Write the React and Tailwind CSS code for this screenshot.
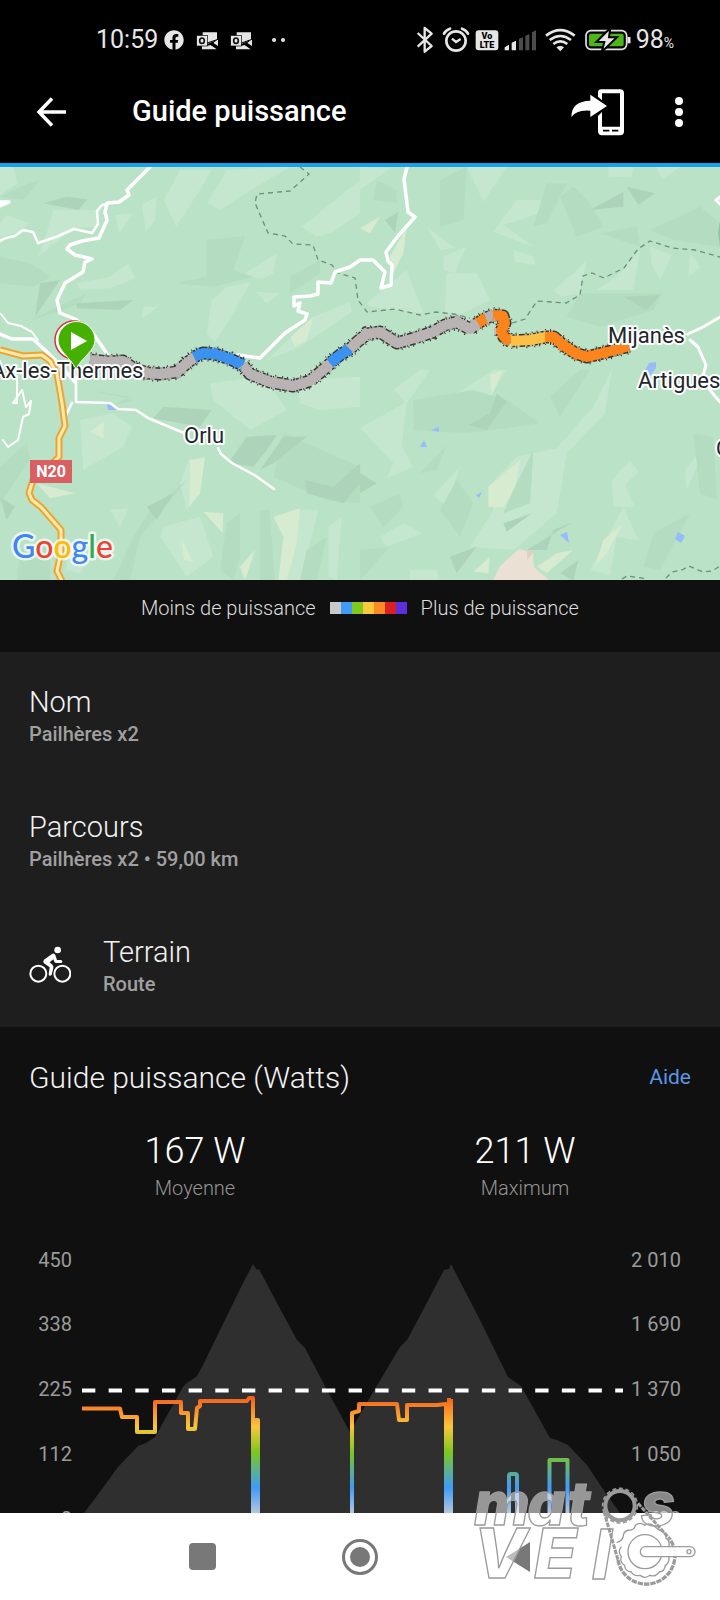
import { FaFacebook } from 'react-icons/fa'

const LEGEND = ['bg-[#c9c9c9]', 'bg-[#3f9bf7]', 'bg-[#7fc91e]', 'bg-[#fbc73c]', 'bg-[#fb8a24]', 'bg-[#dc1f22]', 'bg-[#5b2fdc]']

// Hill shading, one list per quarter of the map, drawn at three times its size
const TERRAIN = [
  {
    at: 'translate(0 -7) scale(.3334)',
    light: [
      '540,30 635,30 600,90 528,200 492,120', '680,30 870,20 820,50 720,110 660,150 622,130',
      '1080,60 1080,160 1000,215 950,230 905,200', '160,150 290,150 290,200 220,205 115,290 140,220',
      '425,135 470,110 465,180 438,215', '345,165 400,160 358,220', '385,310 405,355 330,385 240,390 230,370 330,350',
      '680,380 750,368 700,460 645,545 620,520 635,420', '830,280 820,340 790,355 720,348', '0,20 40,20 52,70 0,105',
      '430,440 475,440 425,475', '765,395 840,400 800,430', '20,165 90,190 50,220 0,230 0,190', '940,470 1050,425 1055,455 900,560 800,600',
    ],
    dark: [
      '620,240 735,228 700,330 760,350 640,380 530,370 620,350', '0,290 90,310 150,350 100,380 0,370', '70,120 120,60 60,80 0,110',
      '870,350 960,300 960,340 870,400', '90,480 260,400 240,430 130,470',
    ],
    deep: ['130,130 200,110 262,118 235,150', '230,430 400,420 360,450 230,445', '120,370 180,360 105,470'],
    cream: ['940,470 920,540 885,560 872,530'],
  },
  {
    at: 'translate(360 -7) scale(.3334)',
    light: [
      '320,20 440,20 370,125', '470,120 545,120 578,148 430,195 520,260 505,255 400,215', '200,200 285,265 240,270',
      '260,340 350,340 390,420 310,460 255,460', '140,330 190,460 30,440 20,430', '250,290 320,260 300,300 285,340 250,330',
      '840,270 820,390 710,390 780,340', '870,260 935,285 900,360 875,310', '745,20 820,20 815,50 745,52', '580,390 650,330 680,300 660,400 600,410',
      '460,270 520,290 525,315 465,305', '990,280 1020,320 985,350', '0,20 90,25 0,90', '890,20 960,20 905,60',
    ],
    dark: [
      '600,110 640,80 690,130 730,200 650,230', '660,400 905,400 880,450 720,500 620,470', '50,60 110,90 110,130 40,120', '240,60 320,20 310,180 240,200',
      '870,210 1020,140 1080,190 1080,260 940,240', '720,220 830,200 840,260', '560,70 620,70 560,190 520,200',
    ],
    deep: ['690,150 790,95 790,140', '800,80 885,100 835,135', '75,180 115,155 105,220', '790,410 900,405 860,450'],
    cream: ['140,200 130,280 100,340 90,290', '0,205 60,170 30,220'],
  },
  {
    at: 'translate(0 203) scale(.3334)',
    light: [
      '240,150 340,130 395,170 370,230 250,300', '630,40 790,20 860,120 750,180 640,90', '490,470 600,440 640,560 560,620 480,500',
      '880,420 955,420 930,520 900,631 840,631', '985,470 1025,440 1010,631 985,620', '330,420 385,415 360,470', '890,30 1080,20 1080,110 960,120 900,100',
      '570,260 540,340 560,420 600,360', '200,560 270,570 240,610 200,600',
    ],
    dark: [
      '450,420 560,330 420,500 390,631 340,631 400,500', '780,420 808,420 825,631 780,631', '0,290 80,220 90,270 0,400', '270,60 390,80 330,110 400,90',
      '850,190 1080,290 1080,400 980,390 820,320', '680,460 720,430 720,560 700,631 660,600', '920,540 980,500 950,631 900,631', '60,540 150,520 150,631 50,631',
    ],
    deep: [
      '490,110 635,120 600,170 460,145', '740,200 830,195 800,240 760,290 685,280', '850,200 920,200 820,280 780,300', '915,330 1000,350 1080,280 1080,340 1030,400 920,370',
      '440,410 520,370 470,450', '0,380 45,410 20,450',
    ],
    cream: ['570,270 615,262 600,370 568,410', '110,340 225,370 150,385', '610,425 670,430 668,490', '820,440 900,415 890,520 860,631 835,631 850,500', '545,510 580,575 552,570', '270,185 312,155 310,205', '720,590 765,540 735,631'],
  },
  {
    at: 'translate(360 203) scale(.3334)',
    light: [
      '0,175 140,95 125,230 160,290 80,325 100,280', '755,0 735,130 620,250 590,430 460,540 330,530 400,420 385,350 470,260 590,235 700,110',
      '300,290 260,410 220,375', '810,270 835,305 795,345 825,410 760,410 755,330', '60,500 130,460 190,490 80,530',
      '1070,180 1010,290 980,360 975,300', '790,410 835,510 770,500 750,615 690,600', '210,0 140,100 100,60 180,0', '290,70 400,0 440,0 390,80 270,100',
      '150,600 230,600 240,631 150,631',
    ],
    dark: [
      '160,90 340,60 440,90 540,160 320,190 160,180', '30,410 120,370 130,410 70,470', '290,330 340,400 300,500 240,420',
      '1000,190 1060,200 1070,390 1020,370', '880,490 990,430 900,600 850,590', '180,310 260,225 230,300', '570,80 660,0 690,0 600,140', '0,540 90,530 0,631',
      // hides the light patch between the two branches of the valley
      '465,350 520,240 510,400 430,430',
    ],
    deep: ['410,70 440,95 380,180 325,165 390,130', '430,460 515,430 440,485', '500,540 640,455 580,480 560,540', '270,560 350,530 290,610', '0,310 50,340 0,370', '600,610 655,570 640,631'],
    cream: ['385,350 480,270 465,350 430,412 385,410', '390,15 430,0 395,75', '790,460 740,550 705,590 730,510', '640,540 560,610 530,590 590,550', '390,560 385,610 340,605'],
  },
]

// Coloured pieces of the track
const TRACK = [
  ['#b9b3b3', 'M90 193 L110 195 L123 194 L133 201 L147 206 L160 207 L177 205 L187 196 L195 190'],
  ['#3b92f0', 'M194 190 L203 186 L215 187 L230 192 L243 198'],
  ['#b9b3b3', 'M243 198 L250 207 L270 215 L293 219 L310 214 L323 203 L332 195'],
  ['#3b92f0', 'M330 196 L340 188 L350 182'],
  ['#b9b3b3', 'M350 182 L357 175 L367 167 L380 165 L397 176 L415 171 L433 165 L445 158 L457 155 L470 162 L479 155'],
  ['#fb841c', 'M478 156 L486 151'],
  ['#b9b3b3', 'M486 151 L494 148'],
  ['#fb841c', 'M493 148 L503 149 L505 156 L501 164 L504 170 L511 175'],
  ['#fbc045', 'M511 174 L530 173 L546 170'],
  ['#fb841c', 'M545 170 L554 170 L563 178 L575 186 L587 190 L603 186 L615 183 L629 179'],
]
const FULL_TRACK = TRACK.map(([, d]) => d).join(' ')

const POWER = [
  'M82 178.500 H120 L122 187 H137 V202 H155 V172 H181 V183 H188 V199 H195 L197 178 L200 176 V171 H247 L249 168 H253 V283',
  'M258 283 V190 H256 V283',
  'M352 283 V183 L359 181 V174 H397 L399 190 H407 V175 H437 L446 174 V283',
  'M449 168 V283 M451 283 V169',
  'M509 283 V246 Q509 244 511 244 H515 Q517 244 517 246 V283',
  'M549.500 283 V230 H567.500 V283',
]

const AXIS_ROWS = [
  { y: 37, watts: '450', metres: '2 010' },
  { y: 101, watts: '338', metres: '1 690' },
  { y: 166, watts: '225', metres: '1 370' },
  { y: 231, watts: '112', metres: '1 050' },
  { y: 296, watts: '0', metres: '730' },
]

function OutlookIcon() {
  return (
    <svg className="w-[23px] h-[19px]" viewBox="0 0 69 57">
      <path d="M20 4H63V26L36 38L20 30Z M66 24V45L52 36Z M18 45L36 44L44 42L62 55H18Z" fill="#e6e6e6" />
      <rect x="2" y="13" width="32" height="32" fill="#e6e6e6" stroke="#000" strokeWidth="2" />
      <ellipse cx="18" cy="29" rx="7" ry="8" fill="none" stroke="#111" strokeWidth="5" />
      <path d="M34 36L66 25M40 38L66 53" stroke="#000" strokeWidth="3" />
    </svg>
  )
}

function StatusBar() {
  return (
    <div className="flex h-20 items-center pl-24 pr-[46px] text-[25px] text-[#e6e6e6]">
      <span>10:59</span>
      <FaFacebook className="ml-[6px] size-5" />
      <div className="ml-3 flex gap-[11px]">
        <OutlookIcon />
        <OutlookIcon />
      </div>
      <div className="ml-[19px] flex gap-[5px]">
        <i className="size-1 rounded-full bg-[#e6e6e6]" />
        <i className="size-1 rounded-full bg-[#e6e6e6]" />
      </div>

      {/* Bluetooth, alarm, VoLTE, signal, wifi, battery */}
      <svg className="ml-auto w-[216px] h-[28px]" viewBox="165 78 648 84" fill="none" stroke="#e6e6e6">
        <path d="M170 99L212 138L191 155V84L212 101L170 140" strokeWidth="7" strokeLinejoin="round" />
        <circle cx="285" cy="123" r="29" strokeWidth="8" />
        <path d="M273 116L285 126L299 117" strokeWidth="7" />
        <path d="M249 101Q254 90 267 86M321 101Q316 90 303 86" strokeWidth="8" strokeLinecap="round" />
        <rect x="344" y="91" width="68" height="60" rx="9" fill="#e6e6e6" stroke="none" />
        <g fill="#000" stroke="none" fontFamily="Roboto, sans-serif" fontWeight="900" fontSize="27">
          <text x="378" y="117" textAnchor="middle" fontSize="27">Vo</text>
          <text x="378" y="144" textAnchor="middle">LTE</text>
        </g>
        <g fill="#e6e6e6" stroke="none">
          <path d="M431 142L444 134V151H431Z M452 128L465 122V151H452Z" />
          <path d="M474 116L486 112V151H474Z M493 107L505 102V151H493Z M513 97L525 91V151H513Z" fill="#4c4c4c" />
          <path d="M586 142Q598 134 609 142L598 154Z" />
        </g>
        <path d="M555 107Q598 74 641 107M566 120Q598 96 630 120M577 132Q598 116 619 132" strokeWidth="8" />
        <rect x="675" y="92" width="122" height="56" rx="15" strokeWidth="5" />
        <rect x="684" y="101" width="104" height="38" rx="6" fill="#4bb51a" stroke="none" />
        <path d="M804 111V130" strokeWidth="9" />
        <path d="M748 84L706 126H730L722 156L768 112H744Z" fill="#e6e6e6" stroke="#000" strokeWidth="6" />
      </svg>
      <span className="ml-1">98<span className="text-sm">%</span></span>
    </div>
  )
}

function AppBar() {
  return (
    <div className="flex h-16 items-center pl-9 pr-[35px] text-white">
      <button type="button" aria-label="Retour">
        <svg className="size-[30px]" viewBox="0 0 30 30" fill="none" stroke="currentColor" strokeWidth="3.500">
          <path d="M30 15H4M16 1.500L3 15L16 28.500" />
        </svg>
      </button>
      <h1 className="ml-[66px] text-[29px] font-medium">Guide puissance</h1>
      <button type="button" aria-label="Envoyer" className="ml-auto">
        <svg className="w-[55px] h-[49px]" viewBox="630 261 165 147">
          <path d="M724 265H780Q792 265 792 277V391Q792 403 780 403H726Q714 403 714 391V345L726 333V377H780V277H726V298L714 287V275Q714 265 724 265Z" fill="#fff" />
          <path d="M729 389H748M756 389H775" stroke="#000" strokeWidth="5" />
          <path d="M691 281L741 315L691 348V329Q650 325 634 348Q634 300 691 299Z" fill="#fff" />
        </svg>
      </button>
      <button type="button" aria-label="Plus d'options" className="ml-12">
        <svg className="w-[12px] h-[32px]" viewBox="0 0 12 32" fill="currentColor">
          <circle cx="6" cy="5" r="4" />
          <circle cx="6" cy="16" r="4" />
          <circle cx="6" cy="27" r="4" />
        </svg>
      </button>
    </div>
  )
}

function RouteMap() {
  return (
    <svg className="block w-full" viewBox="0 0 720 413" fontFamily="Roboto, sans-serif">
      <rect width="720" height="413" fill="#bae2c7" />
      {TERRAIN.map((tile) => (
        <g key={tile.at} transform={tile.at}>
          {tile.light.map((p) => <polygon key={p} points={p} fill="#c5e7cf" />)}
          {tile.dark.map((p) => <polygon key={p} points={p} fill="#b4dcc1" />)}
          {tile.deep.map((p) => <polygon key={p} points={p} fill="#add4ba" />)}
          {tile.cream.map((p) => <polygon key={p} points={p} fill="#d6ebcf" />)}
        </g>
      ))}

      {/* Bare ground and lakes */}
      <path d="M493 413L500 399L519 382L533 386L534 400L549 413Z" fill="#eae0d3" />
      <path d="M527 382L533 386L527 393Z" fill="#e4cfc3" />
      <path d="M107 237H112L118 243H108Z M643 207L649 196L656 195V201L650 209Z" fill="#98bbfb" />
      <path d="M431 263L439 260V265Z M424 273L427 280H420Z M476 328L482 325L479 331Z M560 368L567 365L569 376Z M678 365L685 369L681 376L675 372Z" fill="#98bbfb" />
      <path d="M720 54L718 65L720 80Z" fill="#8fc7a4" />

      {/* Borders */}
      <g fill="none" stroke="#6d8f7b" strokeWidth="1.300" strokeDasharray="5 4">
        <path d="M300 0L309 7L290 24L257 27L255 36L268 66L285 69L293 77L313 78L318 93L332 98L338 106L355 111L358 133L367 145L395 142L420 148L436 145L454 147L470 151" />
        <path d="M512 156L525 152L537 134L566 136L580 128L583 109L592 106L604 111L624 101L638 82L650 74L672 81L695 83L720 90" />
        <path d="M622 412L627 409L648 412M666 411L672 405L682 403L689 399L703 405L712 404L720 399" />
      </g>

      {/* Small roads */}
      <g fill="none" stroke="#fff" strokeWidth="3.500" strokeLinejoin="round" strokeLinecap="round">
        <path d="M150 0L127 23L129 28L119 35L107 36L105 45L107 53L99 71L82 74L70 78L67 82L75 88L84 90L92 92L85 95L83 105L65 116L57 133L60 146L75 152L92 165L110 191" />
        <path d="M0 74L6 71L15 69L23 63L33 65L38 76L56 70L74 62L92 66L98 57L97 44L102 38L108 37" strokeWidth="2.500" />
        <path d="M0 35L9 35L0 39M0 167L12 172H33L46 184L60 198L75 215" />
        <path d="M1 147L8 156L21 159L32 165L38 173" strokeWidth="2" />
        <path d="M238 188L260 191L285 166L305 153L307 147L298 144L300 136L294 139L294 130L310 129L318 127L318 115L331 116L335 105L350 100L360 93H373L385 105L381 121L391 118L392 98L388 94L386 85L398 69L415 50L408 45L404 12L407 0" />
        <path d="M72 236L66 248M76 210V235L110 236L118 242L136 243L148 251L184 266M218 281L221 287L232 296L256 309L274 322" strokeWidth="2.500" />
        <path d="M17 209V236H13L22 223L26 240L31 234L29 247L23 250L18 273L8 280L3 273" strokeWidth="2" />
        <path d="M688 167L703 160L720 150M690 173L698 180L706 198L702 212L714 228L720 235M720 30L716 33L720 37" strokeWidth="3" />
      </g>

      {/* N20 */}
      {[['#f0a32c', 7], ['#ffeab0', 3]].map(([color, width]) => (
        <path key={color} d="M0 183L23 189L42 188L50 194L57 207L62 236L65 259L59 271V290L33 313L29 326L32 333L41 340L61 363V385L57 404L62 414" fill="none" stroke={color} strokeWidth={width} strokeLinejoin="round" />
      ))}

      {/* Track with its ragged outline */}
      <g fill="none" strokeLinejoin="round">
        <path d={FULL_TRACK} stroke="#3a3a35" strokeWidth="13" strokeDasharray="4 1 1 2 6 1" />
        <path d={FULL_TRACK} stroke="#3a3a35" strokeWidth="16" strokeDasharray="1 4 1 9 1 6" />
        <path d={FULL_TRACK} stroke="#c4bfba" strokeWidth="14" strokeDasharray="1 6 1 11" />
        {TRACK.map(([color, d]) => <path key={d} d={d} stroke={color} strokeWidth="10" />)}
        {TRACK.map(([color, d]) => <path key={d} d={d} stroke={color} strokeWidth="13" strokeDasharray="1 5 2 7" />)}
      </g>

      {/* Place names */}
      <g fontSize="22" fill="#22262b" stroke="#fff" strokeWidth="4" strokeLinejoin="round" paintOrder="stroke">
        <text x="-9" y="211">Ax-les-Thermes</text>
        <text x="184" y="276">Orlu</text>
        <text x="608" y="176">Mijanès</text>
        <text x="638" y="221">Artigues</text>
        <text x="716" y="289">Q</text>
      </g>
      <rect x="30" y="293" width="42" height="23" fill="#d95f62" />
      <text x="51" y="310" textAnchor="middle" fontSize="16" fontWeight="700" fill="#fff">N20</text>

      {/* Start pin */}
      <circle cx="74" cy="173" r="19" fill="#fff" stroke="#d8304c" strokeWidth="1.500" />
      <path d="M76 202C70 190 58 184 58 173A18.500 18.500 0 0 1 95 173C95 184 82 190 76 202Z" fill="#46b000" stroke="#f2fbf0" strokeWidth="1" />
      <path d="M71 165L87 174L71 183Z" fill="#fff" />

      <text x="12" y="391" fontSize="32" fontWeight="500" fontFamily="Lato, sans-serif" stroke="#fff" strokeOpacity=".7" strokeWidth="5" strokeLinejoin="round" paintOrder="stroke">
        <tspan fill="#4285f4">G</tspan>
        <tspan fill="#ea4335">o</tspan>
        <tspan fill="#fbbc05">o</tspan>
        <tspan fill="#4285f4">g</tspan>
        <tspan fill="#34a853">l</tspan>
        <tspan fill="#ea4335">e</tspan>
      </text>
    </svg>
  )
}

function Legend() {
  return (
    <div className="flex h-[72px] items-start justify-center gap-[14px] pt-4 text-xl font-light text-[#dedede]">
      <span className="leading-6">Moins de puissance</span>
      <div className="mt-[6px] flex">
        {LEGEND.map((color) => <i key={color} className={`h-[12px] w-[11px] ${color}`} />)}
      </div>
      <span className="leading-6">Plus de puissance</span>
    </div>
  )
}

function InfoRow({ title, value, icon }) {
  return (
    <div className="flex h-[125px] items-center">
      {icon}
      <div>
        <h2 className="text-[29px] leading-9 font-light text-[#f2f2f2]">{title}</h2>
        <p className="mt-[2px] text-xl leading-6 font-medium text-[#a0a0a0]">{value}</p>
      </div>
    </div>
  )
}

function BikeIcon() {
  return (
    <svg className="mr-8 w-[42px] h-[38px]" viewBox="90 857 126 114" fill="none" stroke="#fff">
      <circle cx="118" cy="940" r="24" strokeWidth="6" />
      <circle cx="190" cy="940" r="24" strokeWidth="6" />
      <circle cx="176" cy="869" r="10" fill="#fff" stroke="none" />
      <path d="M160 880Q166 878 169 884L174 899H186Q190 900 190 904Q190 908 186 908H172Q168 908 166 904L163 897L152 906L161 914Q164 918 163 923L158 943Q156 947 152 946Q148 945 149 940L152 921L135 909Q130 904 135 898Z" fill="#fff" stroke="none" />
    </svg>
  )
}

function Stat({ value, label }) {
  return (
    <div className="text-center font-light">
      <p className="text-4xl leading-[46px] text-white">{value}</p>
      <p className="mt-[2px] text-xl leading-6 text-[#949494]">{label}</p>
    </div>
  )
}

function PowerChart() {
  return (
    <svg className="mt-[30px] block w-full" viewBox="0 0 720 283" fontFamily="Roboto, sans-serif">
      <defs>
        <linearGradient id="power" gradientUnits="userSpaceOnUse" x1="0" y1="168" x2="0" y2="283">
          <stop offset="0" stopColor="#f1601f" />
          <stop offset=".1" stopColor="#f98c28" />
          <stop offset=".25" stopColor="#fbc53c" />
          <stop offset=".47" stopColor="#7cc71e" />
          <stop offset=".78" stopColor="#3f9bf7" />
          <stop offset="1" stopColor="#b4c6dd" />
        </linearGradient>
      </defs>
      <path
        d="M84 283L102 259L118 237L138 216L146 213L155 207L183 157L187 153L197 146L202 137L242 55L253 34L257 40L259 39L278 75L297 110L305 118L327 160L350 202L366 174L400 117L407 110L422 82L444 40L449 39L451 34L480 90L508 147L521 156L550 208L557 210L568 215L587 235L605 262L620 283Z"
        fill="#2f2f2f"
      />
      <path d="M82 160.500H623" stroke="#fff" strokeWidth="4" strokeDasharray="13.330 13.330" />
      <g fill="none" stroke="url(#power)" strokeWidth="4" strokeLinejoin="round">
        {POWER.map((d) => <path key={d} d={d} />)}
      </g>
      <g fontSize="20" fill="#9b9b9b" textAnchor="end">
        {AXIS_ROWS.map((row) => (
          <g key={row.y}>
            <text x="72" y={row.y}>{row.watts}</text>
            <text x="681" y={row.y}>{row.metres}</text>
          </g>
        ))}
      </g>
    </svg>
  )
}

function MatosVelo() {
  return (
    <svg className="pointer-events-none absolute right-0 bottom-0 h-[130px] w-[260px]" viewBox="0 0 780 390" fill="#fff" fillOpacity=".5" stroke="#9b9b9b" strokeWidth="4">
      <g fontFamily="Inter, sans-serif" fontWeight="800" fontStyle="italic">
        <g fontSize="180">
          <text x="42" y="166">m</text>
          <text x="202" y="166">a</text>
          <text x="322" y="166">t</text>
          <text x="542" y="166">s</text>
        </g>
        <g fontSize="208">
          <text x="40" y="324">V</text>
          <text x="222" y="324">E</text>
          <text x="396" y="328">l</text>
        </g>
      </g>
      <g fill="none">
        <circle cx="480" cy="107" r="44" strokeWidth="12" />
        <circle cx="480" cy="107" r="52" strokeWidth="5" strokeDasharray="12 8" />
        <path d="M432 125L474 270M534 100L628 205" strokeWidth="9" strokeDasharray="14 3" />
        <path d="M474 270A86 86 0 1 0 628 205" strokeWidth="10" strokeDasharray="16 3" />
        <path d="M470 218Q490 212 490 196Q492 180 512 180Q524 178 526 166Q540 154 554 166Q568 156 582 168Q592 178 606 184Q618 190 618 204Q632 216 626 230Q638 246 626 260Q630 276 616 286Q614 304 598 306Q586 322 570 316Q554 328 540 316Q522 320 514 306Q494 304 494 286Q478 276 484 260Q472 244 484 230" />
        <circle cx="555" cy="245" r="51" />
      </g>
      <path d="M556 230H690A15 15 0 0 1 690 260H556A15 15 0 0 1 556 230Z" fillOpacity=".9" />
      <circle cx="687" cy="245" r="6" fill="none" />
    </svg>
  )
}

function NavBar() {
  return (
    <nav className="relative flex h-[87px] items-center justify-center bg-white">
      <button type="button" aria-label="Applications récentes" className="flex w-[158px] justify-center">
        <i className="size-[27px] rounded bg-[#787878]" />
      </button>
      <button type="button" aria-label="Accueil" className="flex w-[158px] justify-center">
        <i className="flex size-9 items-center justify-center rounded-full border-[3px] border-[#787878]">
          <i className="size-5 rounded-full bg-[#787878]" />
        </i>
      </button>
      <button type="button" aria-label="Précédent" className="flex w-[158px] justify-center">
        <svg className="w-[24px] h-[30px]" viewBox="0 0 24 30">
          <path d="M0 15L24 0V30Z" fill="#787878" />
        </svg>
      </button>
      <MatosVelo />
    </nav>
  )
}

export default function App() {
  return (
    <div className="min-h-screen bg-[#101010] font-[Roboto,sans-serif]">
      <header className="border-b-4 border-[#15a3ee] bg-black pb-[19px]">
        <StatusBar />
        <AppBar />
      </header>

      <main>
        <RouteMap />
        <Legend />

        <section className="bg-[#1e1e1e] px-[29px]">
          <InfoRow title="Nom" value="Pailhères x2" />
          <InfoRow title="Parcours" value="Pailhères x2 • 59,00 km" />
          <InfoRow title="Terrain" value="Route" icon={<BikeIcon />} />
        </section>

        <section className="pt-[33px]">
          <div className="flex items-center justify-between px-[29px]">
            <h2 className="text-[30px] leading-9 font-light text-[#f2f2f2]">Guide puissance (Watts)</h2>
            <a href="#aide" className="text-[21px] text-[#5a97e6]">Aide</a>
          </div>
          <div className="mt-8 grid grid-cols-2 px-[30px]">
            <Stat value="167 W" label="Moyenne" />
            <Stat value="211 W" label="Maximum" />
          </div>
          <PowerChart />
        </section>
      </main>

      <NavBar />
    </div>
  )
}
